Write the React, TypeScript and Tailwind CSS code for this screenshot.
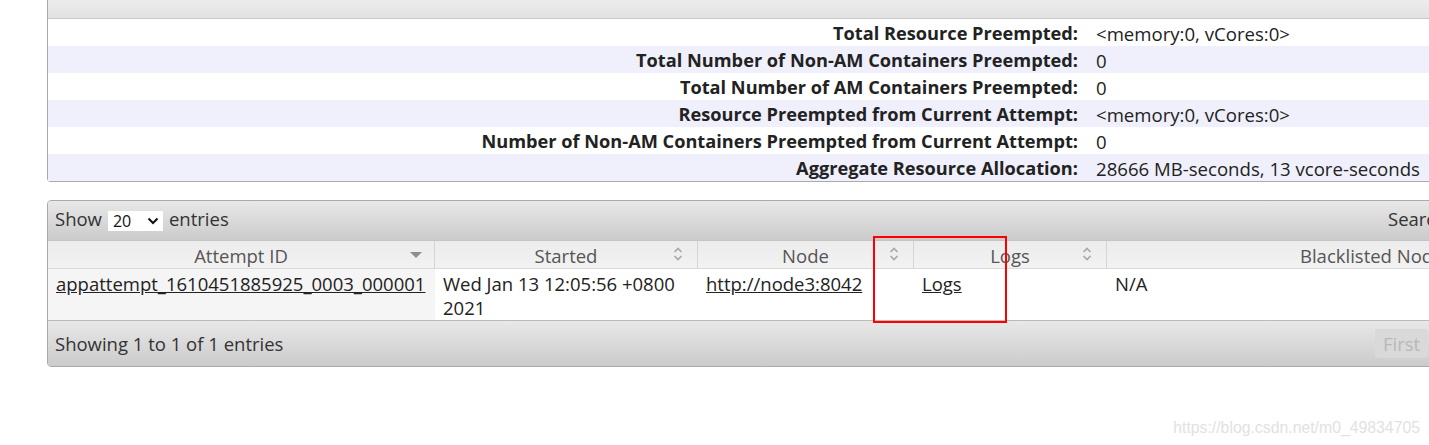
import React from 'react';

const font = { fontFamily: '"Open Sans", "Noto Sans CJK SC", sans-serif' };

const infoRows = [
  { label: 'Total Resource Preempted:', value: '<memory:0, vCores:0>' },
  { label: 'Total Number of Non-AM Containers Preempted:', value: '0' },
  { label: 'Total Number of AM Containers Preempted:', value: '0' },
  { label: 'Resource Preempted from Current Attempt:', value: '<memory:0, vCores:0>' },
  { label: 'Number of Non-AM Containers Preempted from Current Attempt:', value: '0' },
  { label: 'Aggregate Resource Allocation:', value: '28666 MB-seconds, 13 vcore-seconds' },
];

const SortBoth: React.FC = () => (
  <svg width="10" height="16" viewBox="0 0 10 16" className="shrink-0">
    <path d="M1.5 6 L5 2.5 L8.5 6" fill="none" stroke="#a8a8a8" strokeWidth="1.6" />
    <path d="M1.5 10 L5 13.5 L8.5 10" fill="none" stroke="#a8a8a8" strokeWidth="1.6" />
  </svg>
);

const SortDesc: React.FC = () => (
  <svg width="12" height="8" viewBox="0 0 12 8" className="shrink-0">
    <path d="M0 1 L12 1 L6 7 Z" fill="#8e8e8e" />
  </svg>
);

const App: React.FC = () => {
  return (
    <div className="relative h-[445px] w-[1429px] overflow-hidden bg-white text-[#222]" style={font}>
      <div className="pl-[47px]">
        {/* application info panel, top is cut off */}
        <div className="w-[1420px] rounded-b-[4px] border-x border-b border-[#aaa] bg-white">
          <div className="h-[19px] border-b border-[#c8c8c8] bg-gradient-to-b from-[#ececec] to-[#e2e2e2]"></div>
          {infoRows.map((row, i) => (
            <div key={row.label} className={`flex h-[27px] items-center pt-[3px] ${i % 2 === 1 ? 'bg-[#f0f0fc]' : 'bg-white'}`}>
              <div className="w-[1038px] shrink-0 pr-[8px] text-right text-[18.2px] font-bold">{row.label}</div>
              <div className="pl-[10px] text-[18.6px] whitespace-nowrap">{row.value}</div>
            </div>
          ))}
        </div>

        {/* attempts table */}
        <div className="mt-[18px] w-[1420px] overflow-hidden rounded-[4px] border border-[#aaa] text-[18.5px]">
          <div className="flex h-[40px] items-center justify-between border-b border-[#c4c4c4] bg-gradient-to-b from-[#e8e8e8] to-[#cbcbcb] pb-[3px] pl-[7px] text-[#333]">
            <div className="flex items-center">
              <span>Show</span>
              <div className="mx-[6px] mt-[3px] flex h-[20px] w-[55px] items-center justify-between bg-white pl-[5px] pr-[4px] text-[16px] text-[#111]">
                <span>20</span>
                <svg width="12" height="8" viewBox="0 0 12 8">
                  <path d="M1.5 1.5 L6 6 L10.5 1.5" fill="none" stroke="#111" strokeWidth="2" />
                </svg>
              </div>
              <span>entries</span>
            </div>
            <div className="w-[78px] shrink-0 whitespace-nowrap">Search:</div>
          </div>

          <div className="flex h-[28px] items-stretch border-b border-[#dadada] bg-gradient-to-b from-[#ececec] to-[#f2f2f2] text-[#555]">
            <div className="relative flex w-[387px] shrink-0 items-center justify-center border-r border-[#d4d4d4] pt-[3px]">
              <span>Attempt ID</span>
              <span className="absolute right-[12px] top-[10px]"><SortDesc /></span>
            </div>
            <div className="relative flex w-[263px] shrink-0 items-center justify-center border-r border-[#d4d4d4] pt-[3px]">
              <span>Started</span>
              <span className="absolute right-[14px] top-[5px]"><SortBoth /></span>
            </div>
            <div className="relative flex w-[216px] shrink-0 items-center justify-center border-r border-[#d4d4d4] pt-[3px]">
              <span>Node</span>
              <span className="absolute right-[14px] top-[5px]"><SortBoth /></span>
            </div>
            <div className="relative flex w-[193px] shrink-0 items-center justify-center border-r border-[#d4d4d4] pt-[3px]">
              <span>Logs</span>
              <span className="absolute right-[14px] top-[5px]"><SortBoth /></span>
            </div>
            <div className="flex flex-1 items-center pl-[193px] pt-[3px] whitespace-nowrap">Blacklisted Nodes</div>
          </div>

          <div className="flex h-[52px] border-b border-[#bbb] leading-[24px]">
            <div className="w-[387px] shrink-0 bg-[#f5f5f5] px-[8px] pt-[3px]">
              <a className="underline">appattempt_1610451885925_0003_000001</a>
            </div>
            <div className="w-[263px] shrink-0 px-[8px] pt-[3px]">Wed Jan 13 12:05:56 +0800 2021</div>
            <div className="w-[216px] shrink-0 px-[8px] pt-[3px]">
              <a className="underline">http://node3:8042</a>
            </div>
            <div className="w-[193px] shrink-0 px-[8px] pt-[3px]">
              <a className="underline">Logs</a>
            </div>
            <div className="flex-1 px-[8px] pt-[3px]">N/A</div>
          </div>

          <div className="flex h-[45px] items-center justify-between bg-gradient-to-b from-[#e8e8e8] to-[#cbcbcb] pl-[7px] text-[#333]">
            <span>Showing 1 to 1 of 1 entries</span>
            <div className="w-[91px] shrink-0">
              <span className="inline-block rounded-[3px] bg-[#d9d9d9] px-[8px] py-[1px] text-[#b8b8b8]">First</span>
            </div>
          </div>
        </div>
      </div>

      {/* annotation box */}
      <div className="absolute left-[873px] top-[236px] h-[87px] w-[134px] border-2 border-[#f00]"></div>

      <div
        className="absolute right-[9px] top-[416px] text-[15.8px] text-[#e2e2e2]"
        style={{ fontFamily: '"Liberation Sans", Arial, sans-serif' }}
      >
        https://blog.csdn.net/m0_49834705
      </div>
    </div>
  );
};

export default App;
